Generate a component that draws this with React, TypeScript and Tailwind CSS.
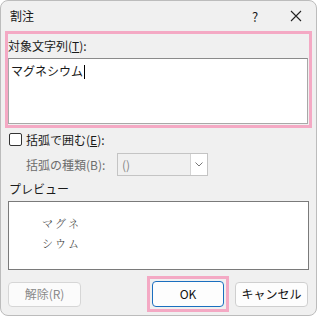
import React from 'react'

const font = { fontFamily: '"Noto Sans CJK JP", "Noto Sans", sans-serif' }

function Checkbox() {
  return <span className="block h-[13px] w-[13px] rounded-[2px] border border-[#333] bg-white" />
}

export default function App() {
  return (
    <div
      style={font}
      className="flex h-[316px] w-[317px] flex-col overflow-hidden rounded-lg border border-[#bcbcbc] bg-[#f0f0f0] text-[12px] text-[#1a1a1a]"
    >
      {/* title bar */}
      <div className="flex h-[30px] shrink-0 items-center pl-[9px]">
        <span className="flex-1 leading-none">割注</span>
        <span className="w-[20px] text-center text-[13px] leading-none">?</span>
        <svg className="ml-[25px] mr-[14px]" width="12" height="12" viewBox="0 0 12 12">
          <path d="M1 1 L11 11 M11 1 L1 11" stroke="#222" strokeWidth="1.1" />
        </svg>
      </div>

      {/* target text */}
      <div className="mx-[4px] flex h-[97px] flex-col border-[3px] border-[#f4a9c4] pb-[1px] pr-[1px]">
        <div className="flex h-[24px] items-center leading-none">
          対象文字列(<span className="underline">T</span>):
        </div>
        <div className="flex-1 border border-[#a8a8a8] border-t-[#8a8a8a] bg-white px-[2px] pt-[3px]">
          <span className="leading-none">マグネシウム</span>
          <span className="ml-[1px] inline-block h-[14px] w-[1px] translate-y-[3px] bg-black" />
        </div>
      </div>

      {/* bracket checkbox */}
      <div className="mt-[5px] flex h-[13px] items-center gap-[4px] pl-[8px]">
        <Checkbox />
        <span className="leading-none">
          括弧で囲む(<span className="underline">E</span>):
        </span>
      </div>

      <div className="mt-[7px] flex h-[23px] items-center pl-[25px]">
        <span className="w-[91px] leading-none text-[#6d6d6d]">括弧の種類(B):</span>
        <div className="flex h-[23px] w-[91px] items-center border border-[#c4c4c4] bg-[#f0f0f0]">
          <span className="flex-1 pl-[4px] leading-none text-[#888]">()</span>
          <div className="flex h-full w-[17px] items-center justify-center border-l border-[#d4d4d4] bg-white">
            <svg width="8" height="5" viewBox="0 0 8 5">
              <path d="M0.5 0.5 L4 4 L7.5 0.5" stroke="#777" strokeWidth="1" fill="none" />
            </svg>
          </div>
        </div>
      </div>

      <div className="mt-[5px] flex h-[15px] items-center pl-[8px] leading-none">プレビュー</div>

      <div
        style={{ fontFamily: '"Noto Serif CJK JP", "Noto Sans CJK JP", serif' }}
        className="mx-[7px] mt-[5px] flex h-[69px] flex-col border border-[#7a7a7a] bg-white pl-[33px] pt-[16px] text-[11px] font-light leading-none tracking-[2px] text-[#444]"
      >
        <span>マグネ</span>
        <span className="mt-[9px]">シウム</span>
      </div>

      {/* buttons */}
      <div className="mt-[6px] flex items-center pl-[7px]">
        <button className="h-[25px] w-[73px] rounded-[4px] border border-[#d6d6d6] bg-[#fbfbfb] text-[#8a8a8a]">
          解除(R)
        </button>
        <div className="ml-[66px] border-[3px] border-[#f4a9c4] p-[2px]">
          <button className="h-[26px] w-[72px] rounded-[4px] border border-[#1b6fbf] bg-[#fdfdfd] text-[#111]">
            OK
          </button>
        </div>
        <button className="ml-[6px] h-[25px] w-[73px] rounded-[4px] border border-[#cfcfcf] bg-[#fdfdfd] text-[#111]">
          キャンセル
        </button>
      </div>
    </div>
  )
}
